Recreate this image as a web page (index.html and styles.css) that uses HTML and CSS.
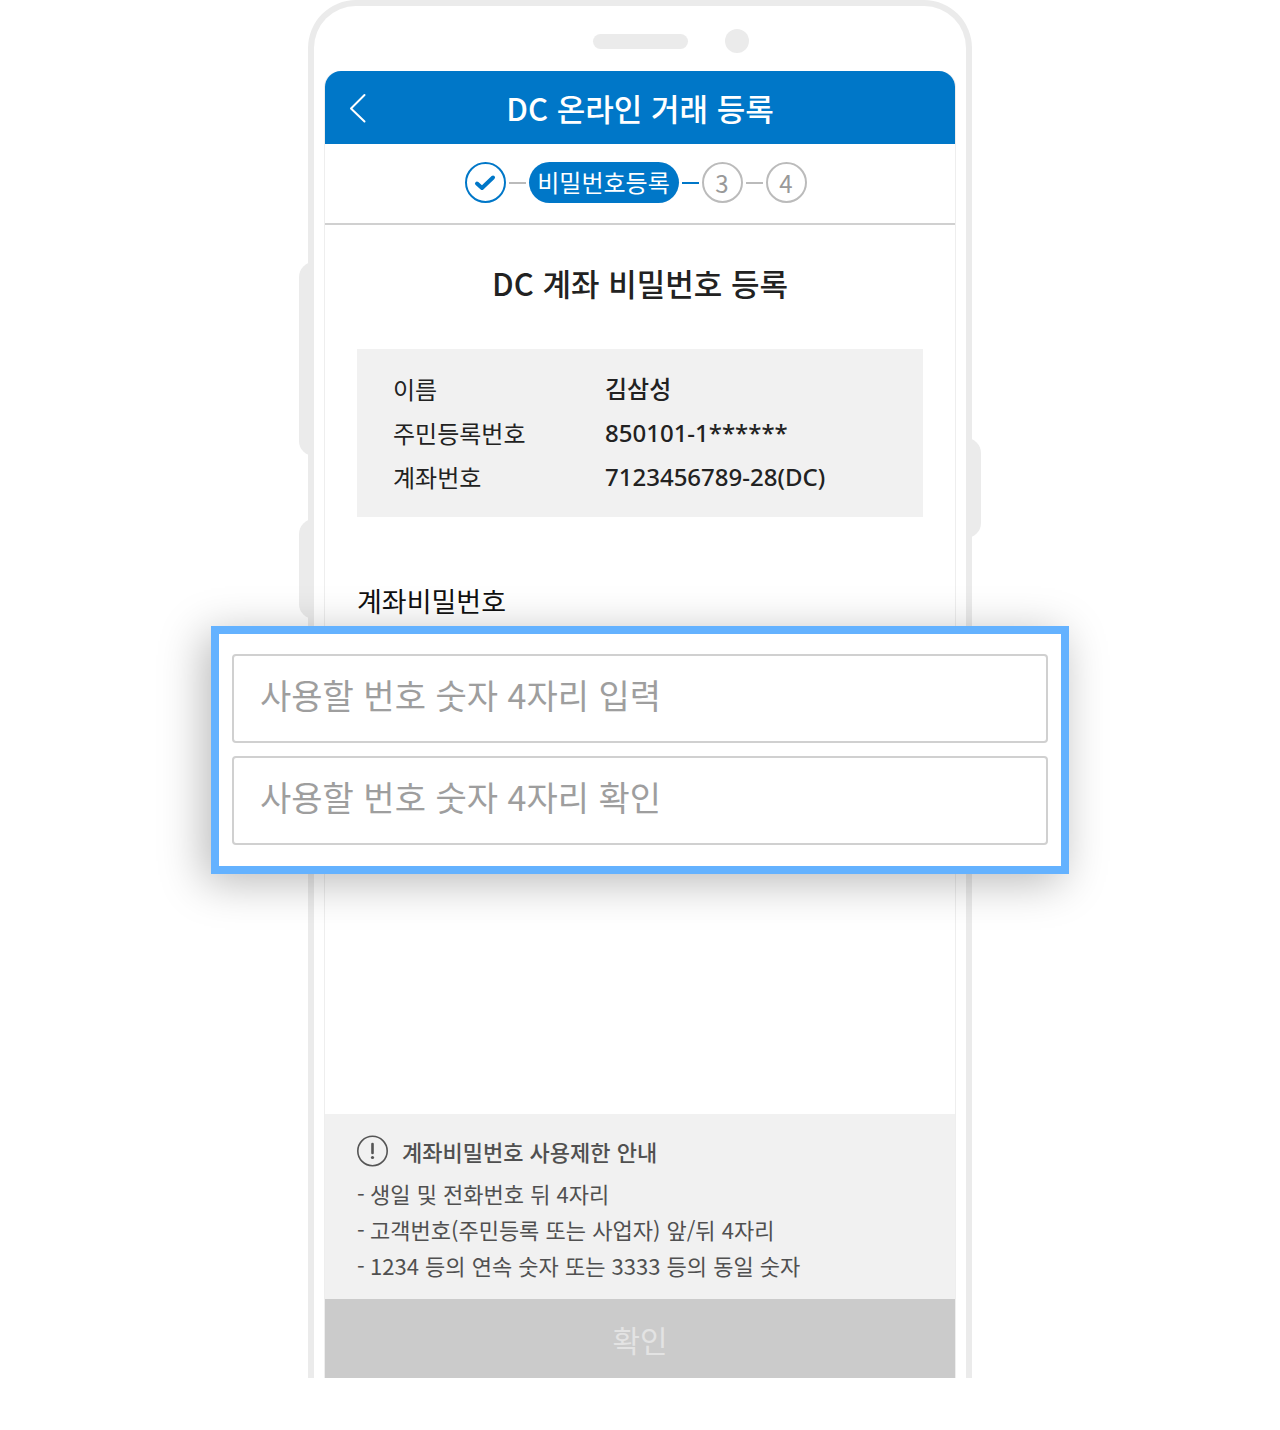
FILE: index.html
```html
<!DOCTYPE html>
<html lang="ko">
<head>
<meta charset="utf-8">
<meta name="viewport" content="width=device-width, initial-scale=1">
<title>DC 온라인 거래 등록</title>
<link rel="stylesheet" href="styles.css">
</head>
<body>
<main class="phone">
  <span class="key key-volume"></span>
  <span class="key key-assist"></span>
  <span class="key key-power"></span>

  <div class="bezel">
    <span class="speaker"></span>
    <span class="camera"></span>
  </div>

  <div class="screen">
    <header class="app-bar">
      <button class="back" type="button" aria-label="뒤로">
        <svg width="18" height="30" viewBox="0 0 18 30" fill="none" stroke="#fff" stroke-width="2" stroke-linecap="round" stroke-linejoin="round" aria-hidden="true"><path d="M15.500 2 2 15.500l13.500 13"/></svg>
      </button>
      <h1 class="app-title">DC 온라인 거래 등록</h1>
    </header>

    <ol class="steps">
      <li class="step">
        <span class="step-dot step-done">
          <svg width="22" height="18" viewBox="0 0 22 18" fill="none" stroke="#0077c8" stroke-width="4" stroke-linecap="round" stroke-linejoin="round" role="img" aria-label="완료"><path d="M3 9.500 8 14 19 3.500"/></svg>
        </span>
      </li>
      <li class="step"><span class="step-current" aria-current="step">비밀번호등록</span></li>
      <li class="step step-next"><span class="step-dot">3</span></li>
      <li class="step"><span class="step-dot">4</span></li>
    </ol>

    <h2 class="page-title">DC 계좌 비밀번호 등록</h2>

    <dl class="account">
      <dt>이름</dt><dd>김삼성</dd>
      <dt>주민등록번호</dt><dd>850101-1******</dd>
      <dt>계좌번호</dt><dd>7123456789-28(DC)</dd>
    </dl>

    <form class="form">
      <label class="field-label" for="pin">계좌비밀번호</label>
      <div class="spotlight">
        <input class="field" id="pin" type="password" inputmode="numeric" maxlength="4" placeholder="사용할 번호 숫자 4자리 입력">
        <input class="field" id="pin-confirm" type="password" inputmode="numeric" maxlength="4" placeholder="사용할 번호 숫자 4자리 확인" aria-label="계좌비밀번호 확인">
      </div>

      <section class="notice">
        <h3 class="notice-title">
          <svg width="32" height="32" viewBox="0 0 32 32" fill="none" stroke="#555" aria-hidden="true"><circle cx="15.500" cy="16" r="14.700" stroke-width="1.600"/><path d="M15.500 9v9" stroke-width="2.600" stroke-linecap="round"/><circle cx="15.500" cy="22.500" r="1.600" fill="#555" stroke="none"/></svg>
          계좌비밀번호 사용제한 안내
        </h3>
        <ul class="notice-list">
          <li>생일 및 전화번호 뒤 4자리</li>
          <li>고객번호(주민등록 또는 사업자) 앞/뒤 4자리</li>
          <li>1234 등의 연속 숫자 또는 3333 등의 동일 숫자</li>
        </ul>
      </section>

      <button class="submit" type="submit" disabled>확인</button>
    </form>
  </div>
</main>
</body>
</html>
```
FILE: styles.css
```css
:root {
  --blue: #0077c8;
  --frame: #ebebeb;
  --panel: #f1f1f1;
}

* {
  box-sizing: border-box;
  margin: 0;
  padding: 0;
}

body {
  background: #fff;
  color: #222;
  font-family: "Noto Sans CJK KR", "Noto Sans", sans-serif;
}

button,
input {
  font: inherit;
}

/* Device frame */
.phone {
  position: relative;
  max-width: 664px;
  margin: 0 auto;
  padding: 0 10px;
  border: 6px solid var(--frame);
  border-bottom: 0;
  border-radius: 48px 48px 0 0;
}

.key {
  position: absolute;
  width: 15px;
  background: var(--frame);
}

.key-volume,
.key-assist {
  left: -15px;
  border-radius: 15px 0 0 15px;
}

.key-volume {
  top: 256px;
  height: 194px;
}

.key-assist {
  top: 513px;
  height: 100px;
}

.key-power {
  top: 432px;
  right: -15px;
  height: 100px;
  border-radius: 0 15px 15px 0;
}

.bezel {
  display: grid;
  grid-template-columns: 1fr auto 1fr;
  align-items: center;
  height: 65px;
  padding-top: 5px;
}

.speaker {
  grid-column: 2;
  width: 95px;
  height: 15px;
  border-radius: 8px;
  background: var(--frame);
}

.camera {
  width: 24px;
  height: 24px;
  margin-left: 37px;
  border-radius: 50%;
  background: var(--frame);
}

.screen {
  border: solid #eee;
  border-width: 0 1px;
  border-radius: 16px 16px 0 0;
}

/* App bar */
.app-bar {
  display: grid;
  grid-template-columns: 1fr auto 1fr;
  align-items: center;
  height: 73px;
  padding: 0 24px;
  border-radius: 16px 16px 0 0;
  background: var(--blue);
  color: #fff;
}

.back {
  display: flex;
  justify-self: start;
  border: 0;
  background: none;
}

.app-title {
  font-size: 31px;
  font-weight: 500;
  line-height: 40px;
}

/* Step indicator */
.steps {
  display: flex;
  justify-content: center;
  gap: 3px;
  padding: 18px 9px 20px 0;
  border-bottom: 2px solid #d0d0d0;
  list-style: none;
}

.step {
  display: flex;
  align-items: center;
  gap: 3px;
  font-size: 24px;
  line-height: 40px;
}

.step + .step::before {
  content: "";
  width: 17px;
  height: 2px;
  background: #bbb;
}

.step + .step-next::before {
  background: var(--blue);
}

.step-dot {
  display: flex;
  align-items: center;
  justify-content: center;
  width: 41px;
  height: 41px;
  border: 2px solid #bbb;
  border-radius: 50%;
  color: #999;
}

.step-done {
  border-color: var(--blue);
}

.step-current {
  width: 150px;
  height: 41px;
  border-radius: 21px;
  background: var(--blue);
  color: #fff;
  text-align: center;
}

.page-title {
  padding: 38px 0 46px;
  font-size: 31px;
  font-weight: 500;
  line-height: 40px;
  text-align: center;
}

/* Account summary */
.account {
  display: grid;
  grid-template-columns: 212px 1fr;
  margin: 0 32px;
  padding: 18px 36px;
  background: var(--panel);
  font-size: 24px;
  line-height: 44px;
}

.account dd {
  font-family: "Noto Sans", "Noto Sans CJK KR", sans-serif;
  font-weight: 500;
}

/* Password form */
.field-label {
  display: block;
  margin: 64px 32px 5px;
  color: #111;
  font-size: 27px;
  line-height: 40px;
}

.spotlight {
  position: relative;
  display: grid;
  gap: 13px;
  margin: 0 -114px 240px;
  padding: 20px 13px 21px;
  border: 8px solid #64b2ff;
  background: #fff;
  box-shadow: -7px 8px 42px rgb(0 0 0 / 28%);
}

.field {
  width: 100%;
  height: 89px;
  padding: 0 26px 8px;
  border: 2px solid #d0d0d0;
  border-radius: 4px;
  background: #fff;
  font-size: 34px;
}

.field::placeholder {
  color: #9e9e9e;
}

.notice {
  padding: 21px 32px 15px;
  background: var(--panel);
  color: #505050;
}

.notice-title {
  display: flex;
  align-items: center;
  gap: 13px;
  margin-bottom: 8px;
  font-size: 22px;
  font-weight: 500;
  line-height: 32px;
}

.notice-list {
  padding-bottom: 1px;
  font-size: 22px;
  line-height: 36px;
  list-style: none;
}

.notice-list li {
  display: flex;
}

.notice-list li::before {
  content: "-";
  flex: 0 0 13px;
}

.submit {
  display: block;
  width: 100%;
  height: 79px;
  border: 0;
  background: #cbcbcb;
  color: #e3e3e3;
  font-size: 30px;
}

@media (max-width: 900px) {
  .spotlight {
    margin-right: 0;
    margin-left: 0;
  }
}
```
